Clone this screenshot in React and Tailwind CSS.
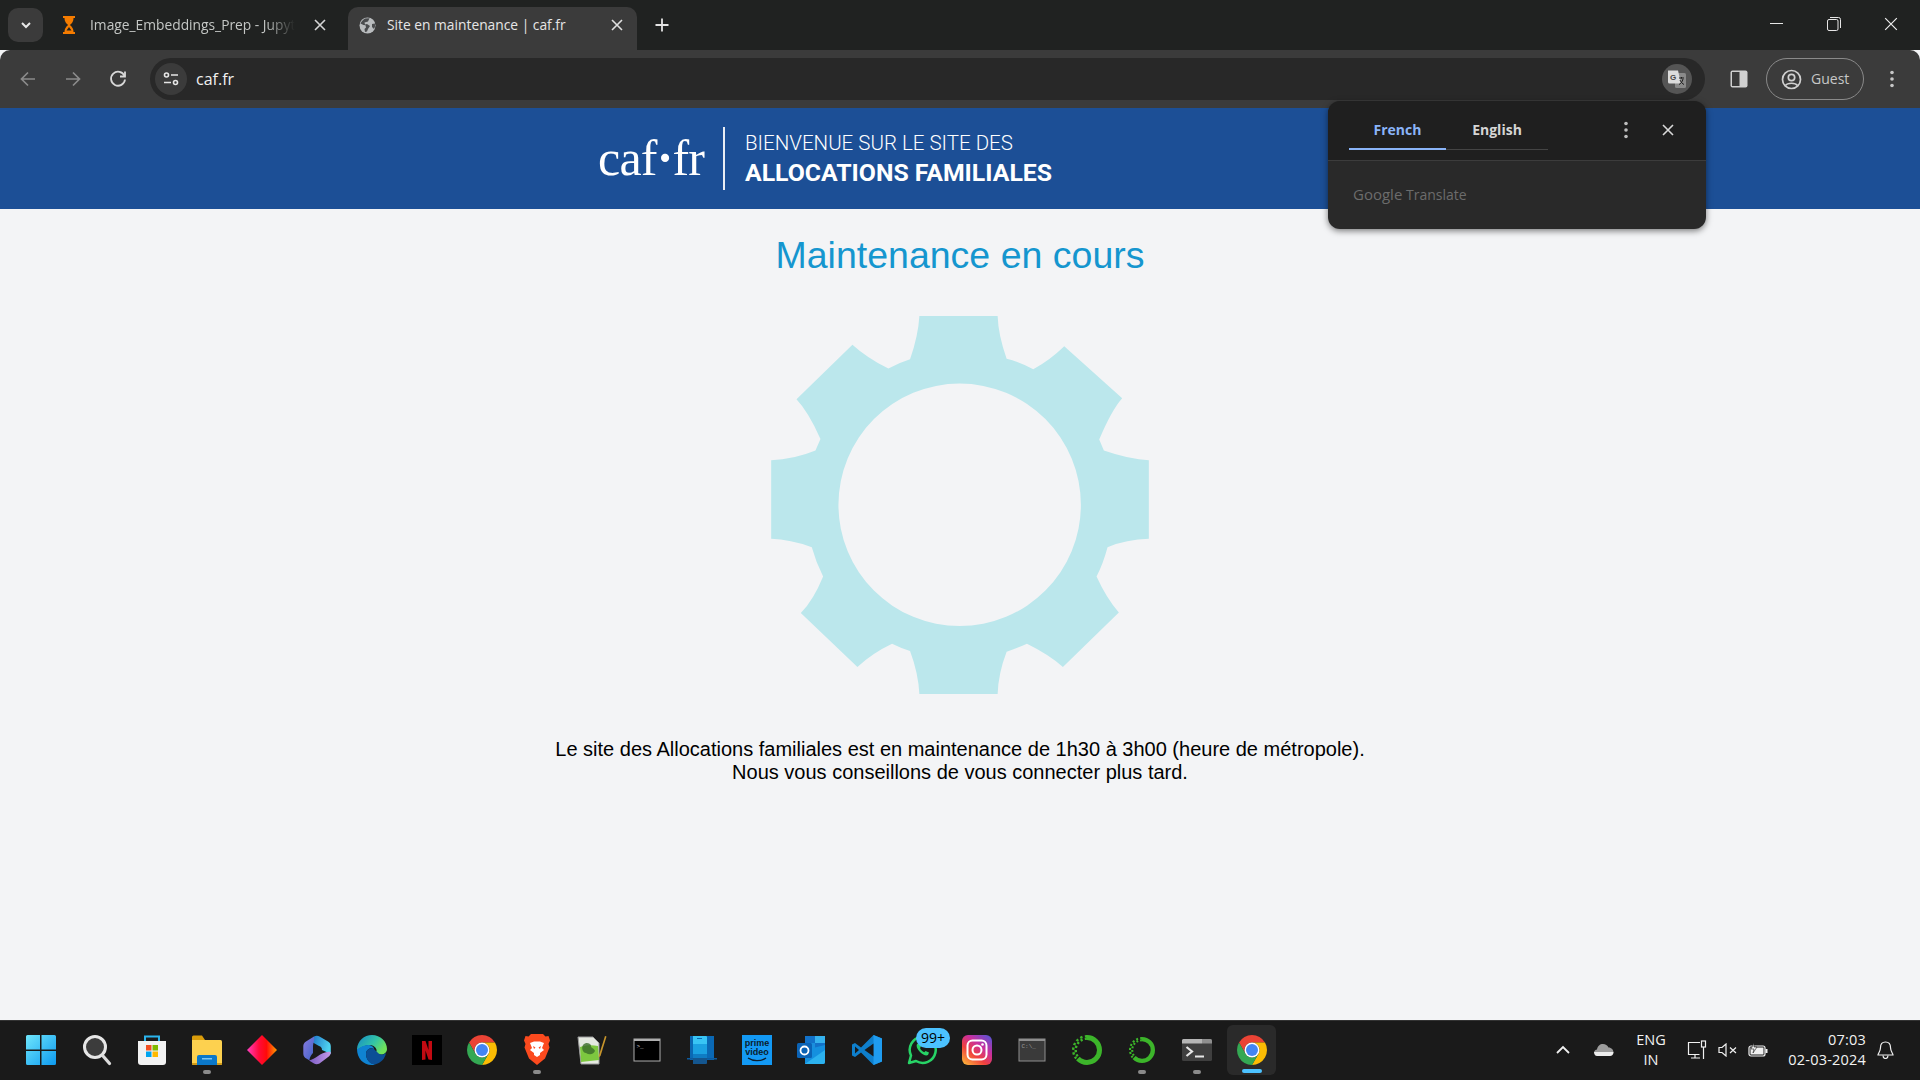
import React from 'react';

const uiFont = { fontFamily: '"Open Sans", "Noto Sans", sans-serif' };

function X({ size = 12, color = '#d5d5d5', width = 1.6 }) {
    return (
        <svg width={size} height={size} viewBox="0 0 12 12" fill="none" stroke={color} strokeWidth={width}>
            <path d="M1 1l10 10M11 1L1 11" />
        </svg>
    );
}

function Dots({ color = '#c7c7c7' }) {
    return (
        <svg width="4" height="18" viewBox="0 0 4 18" fill={color}>
            <circle cx="2" cy="2.5" r="1.8" />
            <circle cx="2" cy="9" r="1.8" />
            <circle cx="2" cy="15.5" r="1.8" />
        </svg>
    );
}

function Hourglass() {
    return (
        <svg width="16" height="18" viewBox="0 0 16 18" fill="none">
            <path d="M2 1h12M2 17h12" stroke="#f57c00" strokeWidth="2" />
            <path d="M3.500 2h9C12.500 6 10 8 9 9c1 1 3.500 3 3.500 7h-9C3.500 12 6 10 7 9 6 8 3.500 6 3.500 2z" fill="#f57c00" />
            <path d="M5.500 14.500h5L8 11z" fill="#202221" />
        </svg>
    );
}

function Globe() {
    return (
        <svg width="17" height="17" viewBox="0 0 17 17">
            <circle cx="8.500" cy="8.500" r="8" fill="#b9bcbe" />
            <path d="M6 1.500C4 3 2.500 4 1.500 6.500l3 1.500 2 .2.500 2.300-1.500 1.500.5 3 2-.5 1-2.500L11 9 8 7 6 7.500 5.500 5.500 9 4.500 10.500 1.200zM13 7l2.800-.5c.6 2 .2 4-.8 5.500l-2-2z" fill="#4a4c4e" />
        </svg>
    );
}

function ChromeIcon() {
    return (
        <svg width="30" height="30" viewBox="4 4 40 40">
            <path d="M6.680 14A20 20 0 0 1 41.320 14H24A10 10 0 0 0 15.340 29Z" fill="#ea4335" />
            <path d="M24 14H41.320A20 20 0 0 1 24 44L32.660 29A10 10 0 0 0 24 14Z" fill="#fbbc04" />
            <path d="M6.680 14L15.340 29A10 10 0 0 0 32.660 29L24 44A20 20 0 0 1 6.680 14Z" fill="#34a853" />
            <circle cx="24" cy="24" r="10" fill="#fff" />
            <circle cx="24" cy="24" r="8" fill="#4285f4" />
        </svg>
    );
}

function WindowsIcon() {
    return (
        <svg width="32" height="32" viewBox="0 0 32 32">
            <defs>
                <linearGradient id="win" x1="0" y1="0" x2="1" y2="1">
                    <stop offset="0" stopColor="#6fe6fb" />
                    <stop offset="1" stopColor="#0d9af0" />
                </linearGradient>
            </defs>
            <path d="M1 2.500A1.500 1.500 0 0 1 2.500 1H15v14.500H1zM16.500 1H29.500A1.500 1.500 0 0 1 31 2.500V15.500H16.500zM1 17H15V31H2.500A1.500 1.500 0 0 1 1 29.500zM16.500 17H31V29.500A1.500 1.500 0 0 1 29.500 31H16.500z" fill="url(#win)" />
        </svg>
    );
}

function SearchIcon() {
    return (
        <svg width="30" height="32" viewBox="0 0 30 32" fill="none">
            <circle cx="13" cy="13" r="10.500" fill="#3c3c3c" stroke="#e6e6e6" strokeWidth="3" />
            <path d="M21 22l6.500 7.500" stroke="#dcdcdc" strokeWidth="3.200" strokeLinecap="round" />
        </svg>
    );
}

function StoreIcon() {
    return (
        <svg width="30" height="32" viewBox="0 0 30 32">
            <path d="M8 7V2.500h14V7" fill="none" stroke="#2bb5ee" strokeWidth="2" />
            <path d="M1 7h28v21a3 3 0 0 1-3 3H4a3 3 0 0 1-3-3z" fill="#f2f2f2" />
            <rect x="9" y="11" width="5.500" height="5.500" fill="#f25022" />
            <rect x="15.500" y="11" width="5.500" height="5.500" fill="#7fba00" />
            <rect x="9" y="17.500" width="5.500" height="5.500" fill="#00a4ef" />
            <rect x="15.500" y="17.500" width="5.500" height="5.500" fill="#ffb900" />
        </svg>
    );
}

function FolderIcon() {
    return (
        <svg width="30" height="30" viewBox="0 0 30 30">
            <path d="M0 2a1.500 1.500 0 0 1 1.500-1.500H10L13 5v24H0z" fill="#d99c0a" />
            <path d="M0 5h28.500a1.500 1.500 0 0 1 1.500 1.500V28.500A1.500 1.500 0 0 1 28.500 30H1.500A1.500 1.500 0 0 1 0 28.500z" fill="#fdd14f" />
            <path d="M0 28h30v.8a1.200 1.200 0 0 1-1.200 1.200H1.200A1.200 1.200 0 0 1 0 28.800z" fill="#d29b16" />
            <path d="M5 22a2 2 0 0 1 2-2h16a2 2 0 0 1 2 2v8H5z" fill="#0b78c9" />
            <rect x="10" y="23" width="10" height="1.500" fill="#7cc6f4" />
        </svg>
    );
}

function DiamondIcon() {
    return (
        <svg width="30" height="30" viewBox="0 0 30 30">
            <defs>
                <linearGradient id="dia" x1="0" y1="0" x2="1" y2="0">
                    <stop offset="0" stopColor="#ff3fc0" />
                    <stop offset="0.400" stopColor="#ff0a3a" />
                    <stop offset="0.650" stopColor="#ff0a0a" />
                    <stop offset="1" stopColor="#ffa000" />
                </linearGradient>
            </defs>
            <path d="M15 0l15 15-15 15L0 15z" fill="url(#dia)" />
        </svg>
    );
}

function CopilotIcon() {
    return (
        <svg width="28" height="30" viewBox="0 0 28 30">
            <defs>
                <linearGradient id="cop1" x1="0" y1="0" x2="1" y2="0.300">
                    <stop offset="0" stopColor="#1e74c9" />
                    <stop offset="1" stopColor="#4fd2f0" />
                </linearGradient>
                <linearGradient id="cop2" x1="0" y1="0" x2="1" y2="1">
                    <stop offset="0" stopColor="#8a7ce0" />
                    <stop offset="1" stopColor="#3f62c8" />
                </linearGradient>
                <linearGradient id="cop3" x1="0" y1="0" x2="1" y2="0">
                    <stop offset="0" stopColor="#7a5bc4" />
                    <stop offset="1" stopColor="#c59ae8" />
                </linearGradient>
            </defs>
            <path d="M11 1.500c2-1.200 4-1 5.500 0L25 6.500c2 1.200 2.800 2.800 2.800 5V19L19 15c0-2-1-3.500-3-4L9 7z" fill="url(#cop1)" />
            <path d="M11 1.500L3 6.500C1 7.800.3 9.500.3 11.500v7c0 2.500 1.200 4 3 5l3 1.800C7 21 9 19 10 18V11c0-3 2-6 1-9.500z" fill="url(#cop2)" />
            <path d="M27.800 17c0 2.500-1 4-3 5.200L16.500 28.500c-2 1-4 1-5.500 0L6 25.500c3-.5 6-2.500 9-4.500 3-2 8-5 12.800-4z" fill="url(#cop3)" />
        </svg>
    );
}

function EdgeIcon() {
    return (
        <svg width="30" height="30" viewBox="0 0 30 30">
            <defs>
                <linearGradient id="edg" x1="0" y1="0" x2="1" y2="0.500">
                    <stop offset="0" stopColor="#1589c9" />
                    <stop offset="0.600" stopColor="#33c4a6" />
                    <stop offset="1" stopColor="#6fe25b" />
                </linearGradient>
            </defs>
            <path d="M15 0c8.500 0 15 6.500 15 14 0 3.500-3 5.500-6 5.500-3 0-5-1.200-5-2.500 2-2-1-7-6.500-7C6 10 2 15 0 14 .5 6 7 0 15 0z" fill="url(#edg)" />
            <path d="M0 14c2 0 5-4 11-4 3 0 6 2 6 4-4-2-8 1-8 5 0 5 4 10 9 10.500C17 30 16 30 15 30 6 30 0 23 0 14z" fill="#0f83d2" />
            <path d="M17 14c2.500 2 4 5 7 5.500 2 .3 4-.5 5-1.500-1 6-5.500 10-11 11.500-5 0-9-5-9-10.500 0-4 4-7 8-5z" fill="#0b4f96" />
        </svg>
    );
}

function NetflixIcon() {
    return (
        <svg width="30" height="30" viewBox="0 0 30 30">
            <rect width="30" height="30" fill="#000" />
            <path d="M10 6h3.500l3 9V6H20v19c-1-.2-2.300-.4-3.500-.4l-3-9V24.600c-1.200 0-2.400.2-3.500.4z" fill="#c20a12" />
        </svg>
    );
}

function BraveIcon() {
    return (
        <svg width="26" height="31" viewBox="0 0 26 31">
            <path d="M7 0h12l2.500 2.500L24.500 2 26 6.500 24.500 10l1 3.500-4.500 11-8 6.500-8-6.500-4.500-11 1-3.500L0 6.500 1.500 2 4.500 2.500z" fill="#fb4a1e" />
            <path d="M6 9l4-1.500h6L20 9l-2 5 2 2-4 3v2l-3 2-3-2v-2l-4-3 2-2z" fill="#fff" />
            <path d="M9 12l2.500 1.500L10 15zM17 12l-2.500 1.500L16 15z" fill="#fb4a1e" />
        </svg>
    );
}

function NotepadIcon() {
    return (
        <svg width="30" height="30" viewBox="0 0 30 30">
            <path d="M1 2h15l6 6v21H4z" fill="#e4e8e0" stroke="#9a9a9a" />
            <path d="M3 12c6-2 12-2 18-1l1 14-18 2z" fill="#7dc73f" />
            <path d="M6 10c3-3 6-2 8 0-1 3 3 3 4 6-2 4-6 4-9 2-3 0-5-5-3-8z" fill="#3b6b2a" opacity="0.800" />
            <path d="M22 20L28 1l1.500.5L23.500 21l-2 1.500z" fill="#c9962c" />
        </svg>
    );
}

function CmdIcon({ fill = '#000', frame = '#aeaeae', text = '#cfcfcf', label = 'C:\\_' }) {
    return (
        <svg width="28" height="24" viewBox="0 0 28 24">
            <rect x="0.500" y="0.500" width="27" height="23" fill={frame} />
            <rect x="1.500" y="3" width="25" height="19.500" fill={fill} />
            <text x="3.500" y="10" fontSize="6" fontFamily="Liberation Mono, monospace" fill={text}>{label}</text>
        </svg>
    );
}

function PhoneLinkIcon() {
    return (
        <svg width="30" height="28" viewBox="0 0 30 28">
            <path d="M3 0h24v24H3z" fill="#0a68b4" />
            <path d="M0 22h30v1.500H0z" fill="#0c5a9e" />
            <path d="M6 0h13a1 1 0 0 1 1 1v26a1 1 0 0 1-1 1H6z" fill="#14568f" />
            <path d="M6 0h13a1 1 0 0 1 1 1v7H6z" fill="#38c5f5" />
            <path d="M6 8h14v10H6z" fill="#1ba1e2" />
            <path d="M6 18h14v4H6z" fill="#0f7cc4" />
            <rect x="10" y="2" width="5" height="1" fill="#0a68b4" />
        </svg>
    );
}

function PrimeIcon() {
    return (
        <svg width="30" height="30" viewBox="0 0 30 30">
            <rect width="30" height="30" fill="#1399f4" />
            <text x="15" y="11" textAnchor="middle" fontSize="9" fontWeight="700" fontFamily="Liberation Sans, sans-serif" fill="#0b1d2c">prime</text>
            <text x="15" y="20" textAnchor="middle" fontSize="9" fontWeight="700" fontFamily="Liberation Sans, sans-serif" fill="#0b1d2c">video</text>
            <path d="M6 23c5 3.500 13 3.500 18 0" fill="none" stroke="#0b1d2c" strokeWidth="1.400" />
        </svg>
    );
}

function OutlookIcon() {
    return (
        <svg width="30" height="30" viewBox="0 0 30 30">
            <path d="M8 1h20v14H8z" fill="#1272c9" />
            <path d="M18 1h10v7H18z" fill="#35b2ee" />
            <path d="M8 8h10v7H8z" fill="#1a8fdd" />
            <path d="M8 15l20-5v17a2 2 0 0 1-2 2H8z" fill="#1490df" />
            <path d="M8 29l20-14v12a2 2 0 0 1-2 2z" fill="#2cb2ef" />
            <rect x="0" y="8" width="15" height="15" rx="1.500" fill="#0b63b5" />
            <circle cx="7.500" cy="15.500" r="4" fill="none" stroke="#fff" strokeWidth="1.800" />
        </svg>
    );
}

function VscodeIcon() {
    return (
        <svg width="30" height="30" viewBox="0 0 30 30">
            <path d="M21.500 0L30 3.500v23L21.500 30 9 17.500 3 22l-3-1.500v-11L3 8l6 4.500z" fill="#0e7fcc" />
            <path d="M21.500 0L30 3.500v23L21.500 30z" fill="#1f9cf0" />
            <path d="M21.500 8.500v13L12.500 15z" fill="#1a1a1a" />
            <path d="M3 11.500L7 15l-4 3.500z" fill="#1a1a1a" />
        </svg>
    );
}

function WhatsAppIcon() {
    return (
        <svg width="30" height="30" viewBox="0 0 30 30" fill="none">
            <path d="M2 28l2-7.500A13 13 0 1 1 9 26z" stroke="#27d366" strokeWidth="2.500" strokeLinejoin="round" />
            <path d="M10 9c-1 2 0 5 3 8s6 4 8 3l1-2.500-3.500-1.500-1.200 1.200c-2-.8-3.500-2.300-4.300-4.300L14 11.500 12.500 8z" fill="#27d366" />
        </svg>
    );
}

function InstagramIcon() {
    return (
        <svg width="30" height="30" viewBox="0 0 30 30">
            <defs>
                <linearGradient id="ig" x1="0.100" y1="1" x2="0.900" y2="0">
                    <stop offset="0" stopColor="#fdb43a" />
                    <stop offset="0.350" stopColor="#f0413d" />
                    <stop offset="0.650" stopColor="#c92f9f" />
                    <stop offset="1" stopColor="#5a53d4" />
                </linearGradient>
            </defs>
            <rect width="30" height="30" rx="6" fill="url(#ig)" />
            <rect x="5.500" y="5.500" width="19" height="19" rx="5" fill="none" stroke="#fff" strokeWidth="2" />
            <circle cx="15" cy="15" r="4.500" fill="none" stroke="#fff" strokeWidth="2" />
            <circle cx="20.500" cy="9.500" r="1.300" fill="#fff" />
        </svg>
    );
}

// solid arc on the right, checkered arc on the left
function RingIcon({ size = 30, id }) {
    return (
        <svg width={size} height={size} viewBox="0 0 30 30" fill="none">
            <defs>
                <clipPath id={id}>
                    <path d="M15 15L0 27V0h15z" />
                </clipPath>
            </defs>
            <circle cx="15" cy="15" r="12.500" stroke="#3cb52a" strokeWidth="5" pathLength="100" strokeDasharray="64 36" strokeDashoffset="-74" />
            <g clipPath={`url(#${id})`}>
                <circle cx="15" cy="15" r="13.800" stroke="#3cb52a" strokeWidth="2.400" strokeDasharray="2.400 2.400" />
                <circle cx="15" cy="15" r="11.300" stroke="#3cb52a" strokeWidth="2.400" strokeDasharray="2.200 2.200" strokeDashoffset="2.200" />
            </g>
        </svg>
    );
}

function TerminalIcon() {
    return (
        <svg width="30" height="22" viewBox="0 0 30 22">
            <rect width="30" height="22" rx="1.500" fill="#3f3f3f" />
            <path d="M0 1.500A1.500 1.500 0 0 1 1.500 0H20v4.500H0z" fill="#b6b6b6" />
            <path d="M20 0h8.500A1.500 1.500 0 0 1 30 1.500v3H20z" fill="#8f8f8f" />
            <path d="M4.500 8l5.500 4.500-5.500 4.500" fill="none" stroke="#e6e6e6" strokeWidth="2.200" />
            <rect x="13" y="16.500" width="9" height="2" fill="#e6e6e6" />
        </svg>
    );
}

function Slot({ children, pip, className = '' }) {
    return (
        <div className={`relative w-[55px] h-full flex items-center justify-center shrink-0 ${className}`}>
            {children}
            {pip && <span className="absolute left-1/2 -translate-x-1/2 bottom-[4px] w-[8px] h-[4px] rounded-full bg-[#8a8a8a]" />}
        </div>
    );
}

function Tray() {
    return (
        <div className="ml-auto flex items-center h-full text-[#f2f2f2] text-[14.500px] leading-[20px]" style={uiFont}>
            <div className="w-[40px] flex justify-center">
                <svg width="14" height="9" viewBox="0 0 14 9" fill="none" stroke="#f0f0f0" strokeWidth="1.800"><path d="M1 8l6-6 6 6" /></svg>
            </div>
            <div className="w-[40px] flex justify-center">
                <svg width="21" height="14" viewBox="0 0 21 14">
                    <path d="M4 6.500C4.500 3 7 1 10 1c2.500 0 4.500 1.500 5.500 3.500C18.500 4.500 20.500 7 20.500 9.500H1C1 8 2.500 6.500 4 6.500z" fill="#9c9c9c" />
                    <path d="M1 9h19.500c0 2.500-1.500 4-3.500 4H4c-2 0-3-2-3-4z" fill="#ededed" />
                </svg>
            </div>
            <div className="w-[56px] text-center"><div>ENG</div><div>IN</div></div>
            <div className="w-[36px] flex justify-center">
                <svg width="20" height="20" viewBox="0 0 20 20" fill="none" stroke="#f0f0f0" strokeWidth="1.200">
                    <path d="M13 2.500H1.500v12h11" />
                    <path d="M4 18h9M8 15v3" />
                    <rect x="14.500" y="1" width="4" height="6" />
                    <path d="M16.500 7v12" />
                </svg>
            </div>
            <div className="w-[24px] flex justify-center">
                <svg width="19" height="14" viewBox="0 0 19 14" fill="none" stroke="#f0f0f0" strokeWidth="1.200">
                    <path d="M1 4.500h3L8 1v12L4 9.500H1z" />
                    <path d="M12 4.500l6 5.500M18 4.500L12 10" />
                </svg>
            </div>
            <div className="w-[38px] flex justify-center">
                <svg width="20" height="14" viewBox="0 0 20 14">
                    <rect x="1" y="3" width="16" height="10" rx="2" fill="none" stroke="#f0f0f0" strokeWidth="1.200" />
                    <rect x="2.500" y="4.500" width="13" height="7" fill="#f0f0f0" />
                    <rect x="17.500" y="6" width="2" height="4" fill="#f0f0f0" />
                    <path d="M6 0L3 6h3L5 10l4-6H6z" fill="#f0f0f0" stroke="#1a1a1a" strokeWidth="0.600" />
                </svg>
            </div>
            <div className="w-[89px] text-right whitespace-nowrap tracking-[0.2px]"><div>07:03</div><div>02-03-2024</div></div>
            <div className="w-[38px] flex justify-center">
                <svg width="17" height="18" viewBox="0 0 17 18" fill="none" stroke="#f0f0f0" strokeWidth="1.200">
                    <path d="M8.500 1C5 1 3.500 3.500 3.500 6.500c0 4-2.500 6-2.500 7.500h15c0-1.500-2.500-3.500-2.500-7.500C13.500 3.500 12 1 8.500 1z" />
                    <path d="M6 14.500c0 2 1 3 2.500 3s2.500-1 2.500-3" />
                </svg>
            </div>
            <div className="w-[16px]" />
        </div>
    );
}

export default function App() {
    return (
        <div className="relative w-full h-screen flex flex-col overflow-hidden bg-[#f3f4f6]" style={{ fontFamily: '"Liberation Sans", Arial, sans-serif' }}>
            {/* chrome tabs */}
            <div className="h-[50px] flex shrink-0 bg-[#202221]" style={uiFont}>
                <div className="ml-[8px] mt-[8px] w-[35px] h-[34px] rounded-[10px] bg-[#3b3b3b] flex items-center justify-center">
                    <svg width="10" height="7" viewBox="0 0 10 7" fill="none" stroke="#e8e8e8" strokeWidth="2"><path d="M1 1l4 4 4-4" /></svg>
                </div>
                <div className="ml-[12px] w-[293px] h-[43px] mt-[7px] pb-[7px] flex items-center pl-[6px] text-[13.800px] text-[#c4c7c5]">
                    <Hourglass />
                    <span className="ml-[13px] w-[209px] shrink-0 whitespace-nowrap overflow-hidden [mask-image:linear-gradient(to_right,black_84%,transparent_98%)]">Image_Embeddings_Prep - Jupyter</span>
                    <span className="ml-[15px]"><X /></span>
                </div>
                <div className="w-[289px] h-[43px] mt-[7px] pb-[7px] rounded-t-[10px] bg-[#3b3b3b] flex items-center pl-[11px] text-[13.800px] text-[#e6e6e6]">
                    <Globe />
                    <span className="ml-[11px] w-[224px] whitespace-nowrap overflow-hidden">Site en maintenance | caf.fr</span>
                    <X color="#e0e0e0" />
                </div>
                <div className="ml-[17px] mt-[17px]">
                    <svg width="16" height="16" viewBox="0 0 16 16" stroke="#e3e3e3" strokeWidth="1.800"><path d="M8 1.500v13M1.500 8h13" /></svg>
                </div>
                <div className="ml-auto flex pr-[1px]">
                    <div className="w-[57px] h-[48px] flex items-center justify-center">
                        <svg width="13" height="2" viewBox="0 0 13 2"><rect width="13" height="1" fill="#e6e6e6" /></svg>
                    </div>
                    <div className="w-[57px] h-[48px] flex items-center justify-center">
                        <svg width="14" height="14" viewBox="0 0 14 14" fill="none" stroke="#e6e6e6"><rect x="0.500" y="2.500" width="10.500" height="11" rx="1.500" /><path d="M3 .5h8.500a2 2 0 0 1 2 2V11" /></svg>
                    </div>
                    <div className="w-[57px] h-[48px] flex items-center justify-center">
                        <X size={14} color="#efefef" width={1} />
                    </div>
                </div>
            </div>

            {/* toolbar */}
            <div className="h-[58px] flex items-center shrink-0 rounded-t-[10px] bg-[#3b3b3b] pl-[5px]" style={uiFont}>
                <div className="w-[45px] flex justify-center">
                    <svg width="16" height="16" viewBox="0 0 16 16" fill="none" stroke="#8b8b8b" strokeWidth="1.700"><path d="M15 8H2M8 1.500L1.500 8 8 14.500" /></svg>
                </div>
                <div className="w-[45px] flex justify-center">
                    <svg width="16" height="16" viewBox="0 0 16 16" fill="none" stroke="#8b8b8b" strokeWidth="1.700"><path d="M1 8h13M8 1.500L14.500 8 8 14.500" /></svg>
                </div>
                <div className="w-[45px] flex justify-center">
                    <svg width="18" height="18" viewBox="0 0 18 18" fill="none" stroke="#d8d8d8" strokeWidth="1.800"><path d="M15.500 6A7 7 0 1 0 16 9.500" /><path d="M16 1.500V6.500H11" /></svg>
                </div>
                <div className="ml-[10px] w-[1555px] h-[42px] rounded-full bg-[#282828] flex items-center pl-[5px] pr-[15px]">
                    <div className="w-[32px] h-[32px] rounded-full bg-[#3b3b3b] flex items-center justify-center">
                        <svg width="16" height="14" viewBox="0 0 16 14" fill="none" stroke="#e6e6e6" strokeWidth="1.600">
                            <circle cx="3.500" cy="3" r="2" />
                            <path d="M8 3h7M1 10.500h7" />
                            <circle cx="12.500" cy="10.500" r="2" />
                        </svg>
                    </div>
                    <span className="ml-[9px] text-[16px] text-[#f0f0f0]">caf.fr</span>
                    <div className="ml-auto -mr-[2px] w-[30px] h-[30px] rounded-full bg-[#555555] flex items-center justify-center">
                        <svg width="20" height="20" viewBox="0 0 20 20">
                            <rect x="8" y="4" width="11" height="15" rx="1.500" fill="#8a8a8a" />
                            <path d="M1 1.500h10l3 13H2.500A1.500 1.500 0 0 1 1 13z" fill="#dcdcdc" />
                            <text x="3" y="11" fontSize="8" fontWeight="700" fontFamily="Liberation Sans, sans-serif" fill="#444444">G</text>
                            <path d="M12 9h5M14.500 8v1.500M16 10c-.5 3-3 5-4 5.500M13 11c.5 2 3 4 4 4.500" fill="none" stroke="#1f1f1f" />
                        </svg>
                    </div>
                </div>
                <div className="ml-[24px] w-[20px] flex justify-center">
                    <svg width="18" height="18" viewBox="0 0 18 18">
                        <rect x="0.500" y="0.500" width="17" height="17" rx="2" fill="#d0d0d0" />
                        <rect x="2" y="2" width="7.500" height="14" fill="#3b3b3b" />
                    </svg>
                </div>
                <div className="ml-[17px] w-[98px] h-[42px] rounded-full border border-[#8a8a8a] flex items-center pl-[14px] text-[14px] text-[#c7c7c7]">
                    <svg width="21" height="21" viewBox="0 0 21 21" fill="none" stroke="#d0d0d0" strokeWidth="1.700">
                        <circle cx="10.500" cy="10.500" r="9" />
                        <circle cx="10.500" cy="8.500" r="3.200" />
                        <path d="M4.500 16.500c2-3 10-3 12 0" />
                    </svg>
                    <span className="ml-[9px] -mt-[2px]">Guest</span>
                </div>
                <div className="ml-[26px]"><Dots /></div>
            </div>

            {/* site header */}
            <div className="h-[101px] shrink-0 bg-[#1c4f96] flex items-center pl-[598px] text-white">
                <span className="w-[108px] text-[50px] leading-none -mt-[2px] whitespace-nowrap tracking-[-0.8px]" style={{ fontFamily: '"Liberation Serif", serif' }}>caf<span className="font-bold">·</span>fr</span>
                <div className="ml-[17px] w-[2px] h-[63px] bg-white/90" />
                <div className="ml-[20px]" style={{ fontFamily: 'Roboto, sans-serif' }}>
                    <div className="text-[20.500px] leading-[27px] font-light whitespace-nowrap">BIENVENUE SUR LE SITE DES</div>
                    <div className="text-[24.800px] leading-[31px] font-bold whitespace-nowrap">ALLOCATIONS FAMILIALES</div>
                </div>
            </div>

            {/* main content */}
            <div className="flex-1 flex flex-col items-center">
                <h1 className="mt-[23px] text-[37.500px] leading-[46px] text-[#1596cf]">Maintenance en cours</h1>
                <svg className="mt-[38px]" width="378" height="378" viewBox="63 47 1134 1135">
                    <path
                        fill="#bbe7ec"
                        fillRule="evenodd"
                        d="M508 47L743 47Q745 105 770 175Q810 185 850 207Q900 180 943 138L1117 294Q1085 330 1048 418L1062 451Q1140 478 1197 480L1197 716Q1130 718 1073 741Q1060 790 1040 829Q1070 895 1107 937L939 1101Q900 1065 831 1031Q800 1045 770 1055Q745 1120 743 1182L508 1182Q505 1120 480 1053Q450 1043 426 1031Q365 1060 322 1101L152 939Q190 900 219 829Q197 785 185 741Q120 718 63 716L63 480Q130 478 196 451L211 416Q175 335 139 297L307 133Q350 172 415 205Q445 188 480 177Q505 105 508 47ZM629 250A364 364 0 1 0 629 978A364 364 0 1 0 629 250Z"
                    />
                </svg>
                <p className="mt-[44px] text-[20px] leading-[23px] text-center text-black">
                    Le site des Allocations familiales est en maintenance de 1h30 à 3h00 (heure de métropole).
                    <br />
                    Nous vous conseillons de vous connecter plus tard.
                </p>
            </div>

            {/* windows taskbar */}
            <div className="h-[60px] shrink-0 flex items-center bg-[#1a1a1a] border-t border-[#333333] pl-[13px] pb-[2px]">
                <Slot><WindowsIcon /></Slot>
                <Slot className="ml-px"><SearchIcon /></Slot>
                <Slot><StoreIcon /></Slot>
                <Slot pip><FolderIcon /></Slot>
                <Slot><DiamondIcon /></Slot>
                <Slot><CopilotIcon /></Slot>
                <Slot><EdgeIcon /></Slot>
                <Slot><NetflixIcon /></Slot>
                <Slot><ChromeIcon /></Slot>
                <Slot pip><BraveIcon /></Slot>
                <Slot><NotepadIcon /></Slot>
                <Slot><CmdIcon label=">_" /></Slot>
                <Slot><PhoneLinkIcon /></Slot>
                <Slot><PrimeIcon /></Slot>
                <Slot><OutlookIcon /></Slot>
                <Slot><VscodeIcon /></Slot>
                <Slot>
                    <WhatsAppIcon />
                    <span className="absolute left-[22px] top-[7px] w-[34px] h-[20px] rounded-[10px] bg-[#4cc2ff] text-black text-[14px] leading-[20px] text-center" style={uiFont}>99+</span>
                </Slot>
                <Slot><InstagramIcon /></Slot>
                <Slot><CmdIcon fill="#3a3a3a" frame="#8e8e8e" text="#9a9a9a" /></Slot>
                <Slot><RingIcon id="ringa" /></Slot>
                <Slot pip><RingIcon size={26} id="ringb" /></Slot>
                <Slot pip><TerminalIcon /></Slot>
                <Slot>
                    <div className="relative w-[49px] h-[50px] mt-[1px] rounded-[6px] bg-[#2a2a2a] flex items-center justify-center">
                        <ChromeIcon />
                        <span className="absolute left-[15px] bottom-[2px] w-[20px] h-[4px] rounded-full bg-[#4cc2ff]" />
                    </div>
                </Slot>
                <Tray />
            </div>

            {/* translate bubble */}
            <div className="absolute left-[1328px] top-[101px] w-[378px] h-[128px] rounded-[12px] overflow-hidden bg-[#292929] shadow-[0_2px_6px_rgba(0,0,0,0.5)]" style={uiFont}>
                <div className="relative h-[60px] bg-[#1f1f1f] border-b border-[#3c3c3c] flex">
                    <div className="ml-[21px] w-[97px] h-[49px] pt-[9px] border-b-2 border-[#8ab4f8] flex items-center justify-center text-[14px] font-bold text-[#8ab4f8]">French</div>
                    <div className="w-[102px] h-[49px] pt-[9px] border-b border-[#444444] flex items-center justify-center text-[14px] font-bold text-[#d5d5d5]">English</div>
                    <div className="ml-[76px] h-[49px] pt-[9px] flex items-center"><Dots color="#bdbdbd" /></div>
                    <div className="ml-[34px] h-[49px] pt-[9px] flex items-center"><X size={12} color="#d8d8d8" /></div>
                </div>
                <div className="pl-[25px] pt-[23px] text-[14px] leading-[20px] text-[#6c6c6c]">
                    <span className="text-[15px]">Google</span> Translate
                </div>
            </div>
        </div>
    );
}
